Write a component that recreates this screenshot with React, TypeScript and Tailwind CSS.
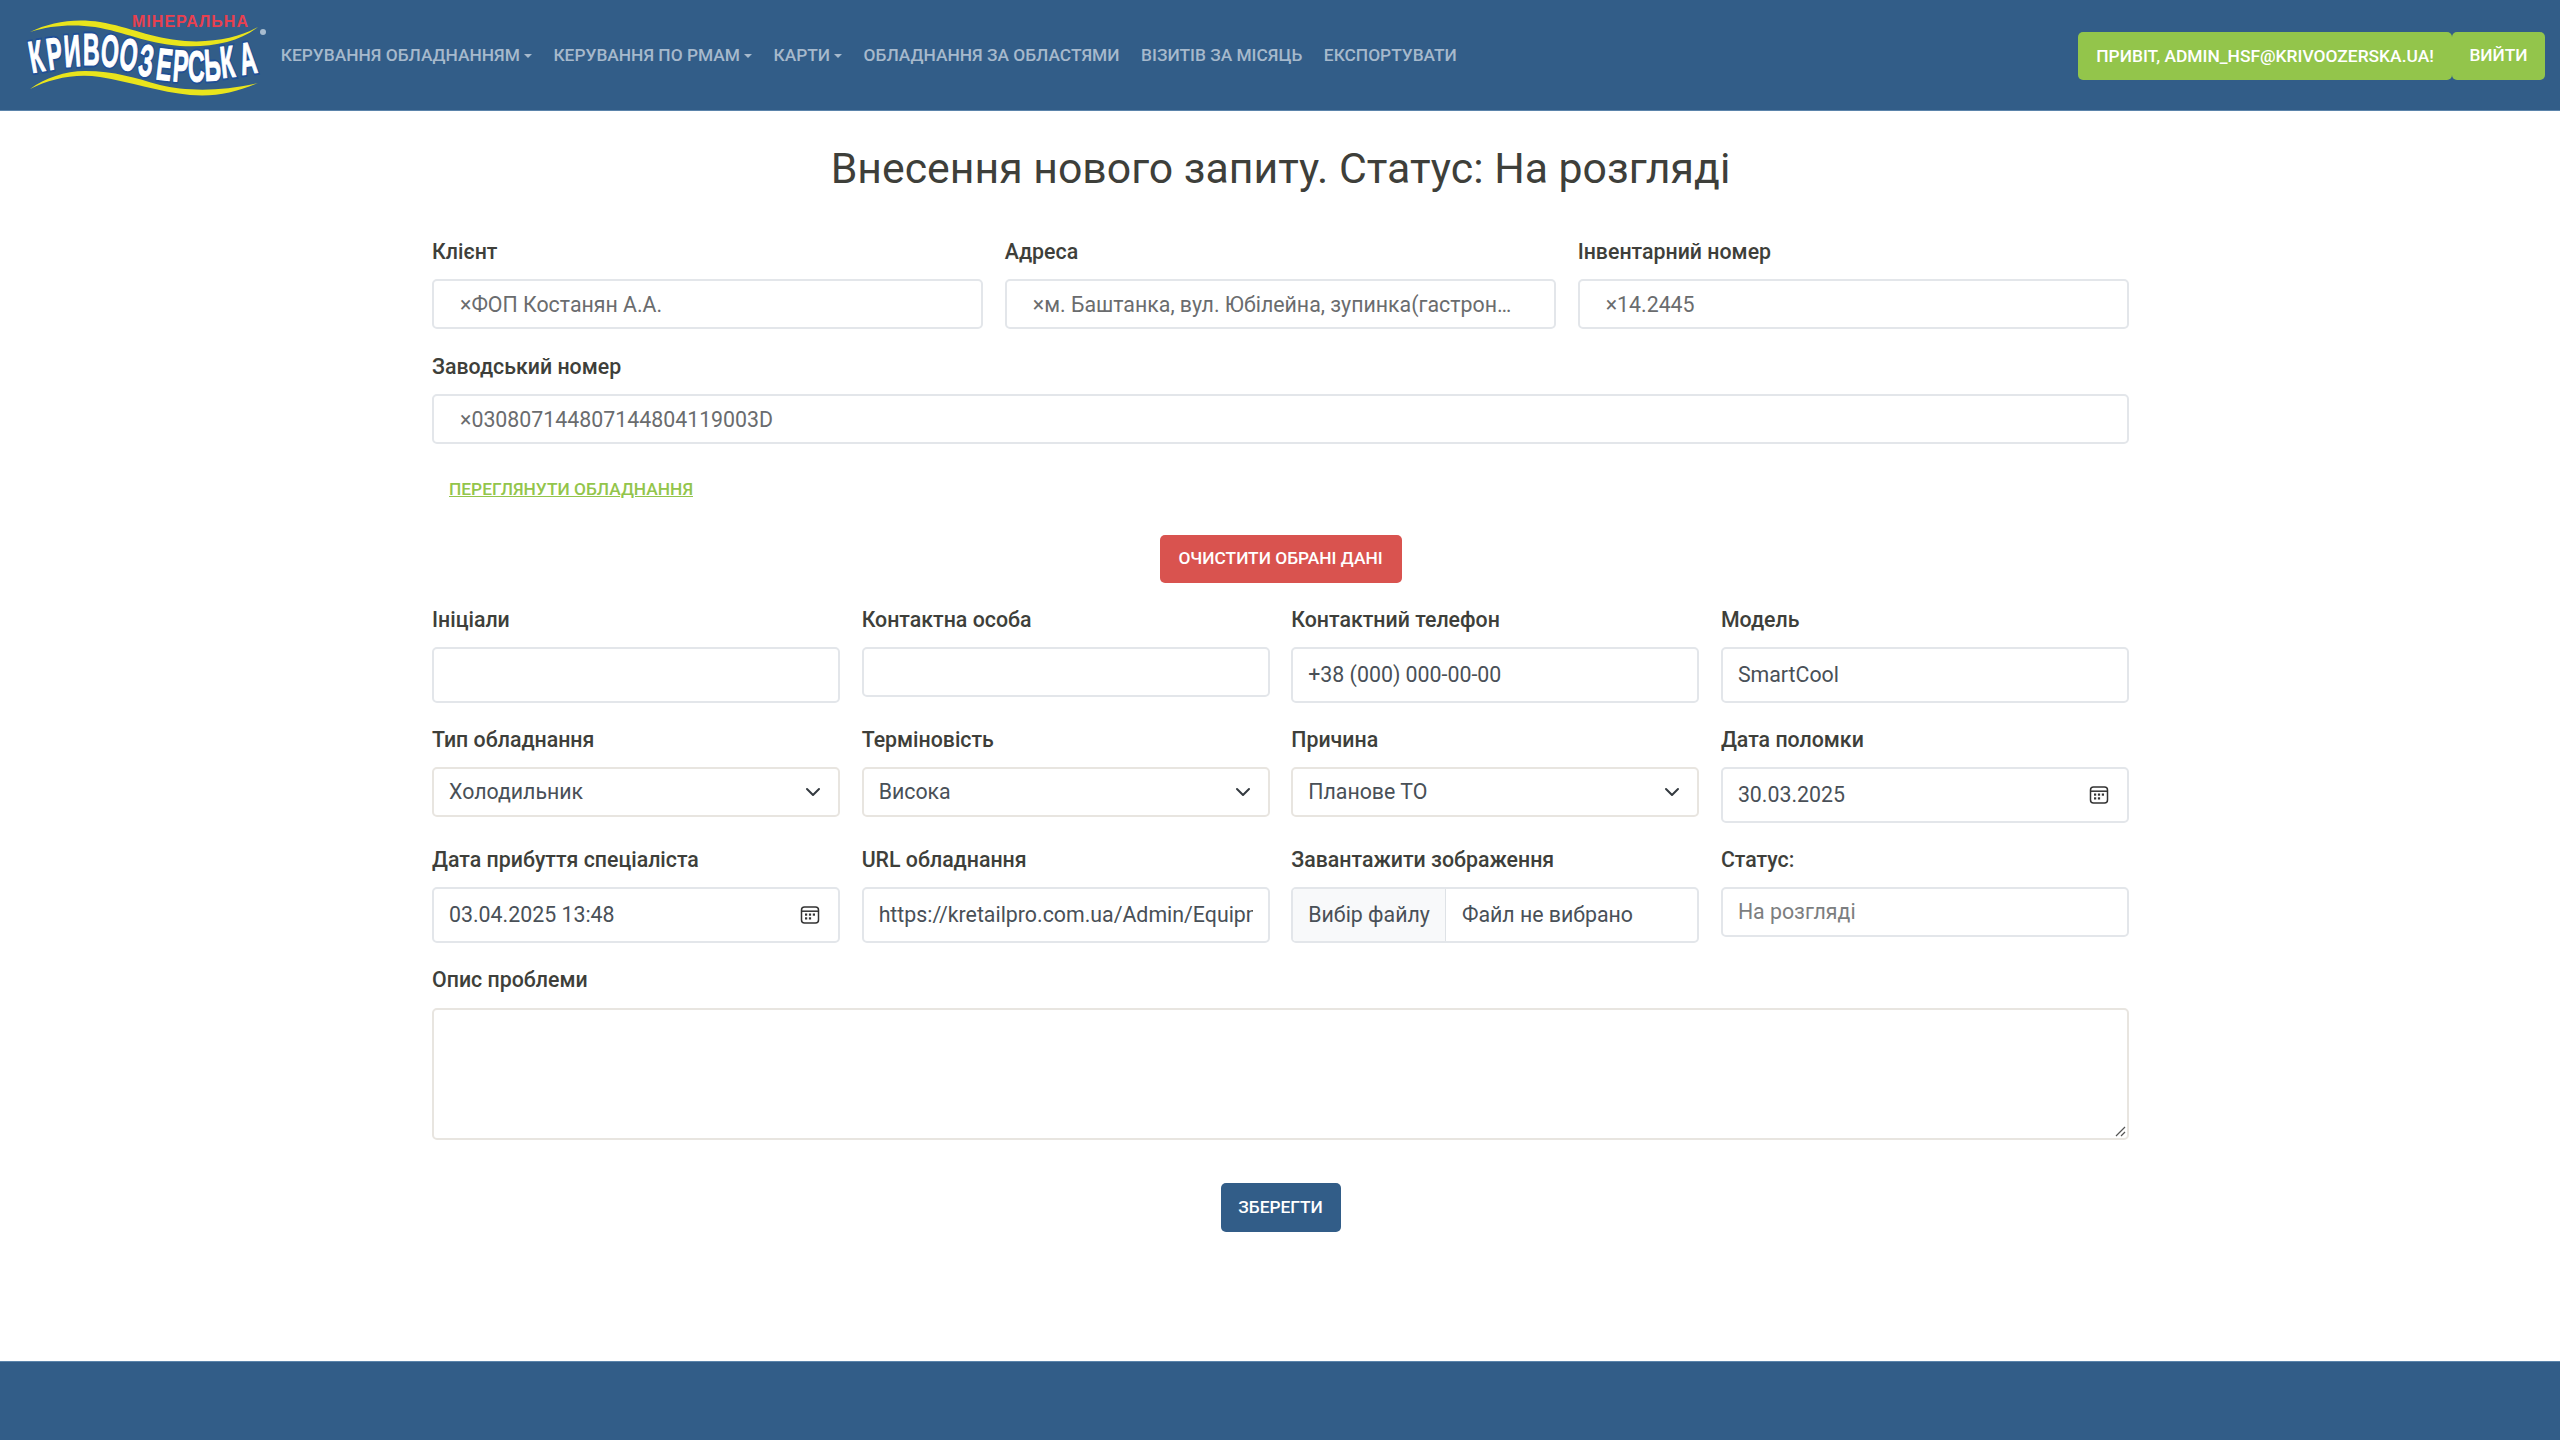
import React from "react";

const NAVY = "bg-[#325d88]";

function Label({ children }: { children: React.ReactNode }) {
  return <label className="mb-[15px] block h-[24px] text-[21.33px] leading-[24px] font-medium text-[#3e3f3a]">{children}</label>;
}

function Tagged({ text, label }: { text: string; label: string }) {
  return (
    <div>
      <Label>{label}</Label>
      <div className="flex h-[50px] items-center overflow-hidden rounded-[5px] border-2 border-[#e3e6ea] bg-white pt-[2px] pl-[26px] pr-[42px] text-[21.33px] text-[#6a6c6e]">
        <span className="truncate">×{text}</span>
      </div>
    </div>
  );
}

function Field({ label, h = 56, value, placeholder }: { label: string; h?: number; value?: string; placeholder?: boolean }) {
  return (
    <div>
      <Label>{label}</Label>
      <div
        className={`flex items-center rounded-[5px] border-2 border-[#e3e6ea] bg-white px-[15px] text-[21.33px] ${placeholder ? "text-[#7c7e80]" : "text-[#495057]"}`}
        style={{ height: h }}
      >
        <span className="block w-full overflow-hidden whitespace-nowrap">{value}</span>
      </div>
    </div>
  );
}

function Chevron() {
  return (
    <svg viewBox="0 0 16 16" className="h-[16px] w-[16px] shrink-0 text-[#343a40]" fill="none" stroke="currentColor" strokeWidth="2" strokeLinecap="round" strokeLinejoin="round">
      <path d="M2 5l6 6 6-6" />
    </svg>
  );
}

function Sel({ label, value }: { label: string; value: string }) {
  return (
    <div>
      <Label>{label}</Label>
      <div className="flex h-[50px] items-center justify-between rounded-[5px] border-2 border-[#e8e5e0] bg-white pl-[15px] pr-[17px] text-[21.33px] text-[#495057]">
        <span>{value}</span>
        <Chevron />
      </div>
    </div>
  );
}

function Cal() {
  return (
    <svg viewBox="0 0 20 20" className="h-[20px] w-[20px] shrink-0 text-[#333]" fill="none" stroke="currentColor" strokeWidth="1.5">
      <rect x="1.5" y="2" width="17" height="16" rx="3" />
      <path d="M1.5 6.2h17" />
      <g fill="currentColor" stroke="none">
        <rect x="5" y="8.5" width="2.2" height="2.2" />
        <rect x="8.9" y="8.5" width="2.2" height="2.2" />
        <rect x="12.8" y="8.5" width="2.2" height="2.2" />
        <rect x="5" y="12.3" width="2.2" height="2.2" />
        <rect x="8.9" y="12.3" width="2.2" height="2.2" />
      </g>
    </svg>
  );
}

function DateField({ label, value }: { label: string; value: string }) {
  return (
    <div>
      <Label>{label}</Label>
      <div className="flex h-[56px] items-center justify-between rounded-[5px] border-2 border-[#e3e6ea] bg-white pl-[15px] pr-[18px] text-[21.33px] text-[#495057]">
        <span>{value}</span>
        <Cal />
      </div>
    </div>
  );
}

function NavItem({ children, caret }: { children: React.ReactNode; caret?: boolean }) {
  return (
    <span className="flex items-center whitespace-nowrap px-[10.8px] text-[17.33px] font-medium text-[#a6b9cc] uppercase">
      {children}
      {caret && <span className="ml-[4px] h-0 w-0 border-x-[4px] border-t-[4px] border-x-transparent border-t-[#a6b9cc]" />}
    </span>
  );
}

const letters: [string, number, number, number][] = [
  ["К", 32, 73, -10],
  ["Р", 49, 70, -8],
  ["И", 65, 67, -4],
  ["В", 83, 65, 0],
  ["О", 100, 66, 4],
  ["О", 118, 69, 7],
  ["З", 137, 75, 8],
  ["Е", 155, 79, 7],
  ["Р", 172, 81, 4],
  ["С", 188, 82, 0],
  ["Ь", 205, 81, -3],
  ["К", 222, 78, -6],
  ["А", 242, 75, -9],
];

function Logo() {
  return (
    <svg viewBox="0 0 270 111" className="-mt-[2px] h-[111px] w-[270px] shrink-0">
      <path d="M30 32C50 22 75 18 100 22C130 27 150 38 185 41C215 43 240 37 258 27C240 42 210 48 180 46C145 43 125 32 95 27C75 24 50 25 30 32Z" fill="#e9e41c" />
      <path d="M30 89C45 78 65 71 85 71C115 71 135 78 160 85C185 91 220 92 258 83C235 93 215 97 190 95C160 92 130 82 100 77C75 73 50 79 30 89Z" fill="#e9e41c" />
      <g fontFamily="Liberation Sans" fontWeight="700">
        {letters.map(([c, x, y, r], i) => (
          <text key={i} transform={`translate(${x} ${y}) rotate(${r}) scale(0.72 1.4)`} fontSize="32" fill="#1f4f96" stroke="#1f4f96" strokeWidth="3.5">
            {c}
          </text>
        ))}
        {letters.map(([c, x, y, r], i) => (
          <text key={i} transform={`translate(${x} ${y}) rotate(${r}) scale(0.72 1.4)`} fontSize="32" fill="#ffffff" stroke="#ffffff" strokeWidth="0.8">
            {c}
          </text>
        ))}
      </g>
      <text x="132" y="27" fontFamily="Liberation Sans" fontWeight="700" fontSize="16" textLength="116" lengthAdjust="spacing" fill="#e8404f">
        МІНЕРАЛЬНА
      </text>
      <circle cx="263" cy="32" r="3" fill="#a8bccf" />
    </svg>
  );
}

export default function App() {
  return (
    <div className="flex min-h-[1440px] flex-col bg-white font-['Roboto','Liberation_Sans',sans-serif]">
      <header className={`flex h-[111px] items-center border-b border-[#5b84ab] ${NAVY} pt-[2px] pr-[15px]`}>
        <Logo />
        <nav className="flex flex-1 items-center">
          <NavItem caret>Керування обладнанням</NavItem>
          <NavItem caret>Керування по РМАМ</NavItem>
          <NavItem caret>Карти</NavItem>
          <NavItem>Обладнання за областями</NavItem>
          <NavItem>Візитів за місяць</NavItem>
          <NavItem>Експортувати</NavItem>
        </nav>
        <div className="flex">
          <span className="flex h-[48px] w-[374px] items-center justify-center rounded-[5px] bg-[#93c54b] text-[17.4px] font-medium whitespace-nowrap text-white">
            ПРИВІТ, ADMIN_HSF@KRIVOOZERSKA.UA!
          </span>
          <span className="flex h-[48px] w-[93px] items-center justify-center rounded-[5px] bg-[#93c54b] text-[17.33px] font-medium text-white">
            ВИЙТИ
          </span>
        </div>
      </header>

      <main className="ml-[432px] w-[1697px] flex-1 pt-[33px]">
        <h1 className="text-center text-[42.8px] leading-[48px] font-normal text-[#3e3f3a]">Внесення нового запиту. Статус: На розгляді</h1>

        <div className="mt-[48px] grid grid-cols-3 gap-x-[21.5px]">
          <Tagged label="Клієнт" text="ФОП Костанян А.А." />
          <Tagged label="Адреса" text="м. Баштанка, вул. Юбілейна, зупинка(гастрономчик)" />
          <Tagged label="Інвентарний номер" text="14.2445" />
        </div>
        <div className="mt-[26px]">
          <Tagged label="Заводський номер" text="030807144807144804119003D" />
        </div>

        <div className="mt-[35px] pl-[17px] text-[17.33px] leading-[20px] font-medium text-[#93c54b] underline">ПЕРЕГЛЯНУТИ ОБЛАДНАННЯ</div>

        <div className="mt-[36px] flex justify-center">
          <span className="flex h-[48px] w-[242px] items-center justify-center rounded-[5px] bg-[#d9534f] text-[17.33px] font-medium text-white">
            ОЧИСТИТИ ОБРАНІ ДАНІ
          </span>
        </div>

        <div className="mt-[25px] grid grid-cols-4 items-start gap-x-[21.5px]">
          <div className="h-[120px]"><Field label="Ініціали" /></div>
          <div className="h-[120px]"><Field label="Контактна особа" h={50} /></div>
          <div className="h-[120px]"><Field label="Контактний телефон" value="+38 (000) 000-00-00" /></div>
          <div className="h-[120px]"><Field label="Модель" value="SmartCool" /></div>

          <div className="h-[120px]"><Sel label="Тип обладнання" value="Холодильник" /></div>
          <div className="h-[120px]"><Sel label="Терміновість" value="Висока" /></div>
          <div className="h-[120px]"><Sel label="Причина" value="Планове ТО" /></div>
          <div className="h-[120px]"><DateField label="Дата поломки" value="30.03.2025" /></div>

          <div className="h-[120px]"><DateField label="Дата прибуття спеціаліста" value="03.04.2025 13:48" /></div>
          <div className="h-[120px]"><Field label="URL обладнання" value="https://kretailpro.com.ua/Admin/Equipment/Details/1" /></div>
          <div className="h-[120px]">
            <Label>Завантажити зображення</Label>
            <div className="flex h-[56px] items-center overflow-hidden rounded-[5px] border-2 border-[#e3e6ea] bg-white text-[21.33px] text-[#495057]">
              <span className="flex h-full items-center border-r border-[#dee2e6] bg-[#f8f9fa] px-[15px]">Вибір файлу</span>
              <span className="px-[16px]">Файл не вибрано</span>
            </div>
          </div>
          <div className="h-[120px]"><Field label="Статус:" h={50} value="На розгляді" placeholder /></div>
        </div>

        <Label>Опис проблеми</Label>
        <div className="relative mt-[16px] h-[132px] rounded-[5px] border-2 border-[#e8e5e0] bg-white">
          <svg viewBox="0 0 12 12" className="absolute right-[1px] bottom-[1px] h-[12px] w-[12px]" stroke="#555" strokeWidth="1.2">
            <path d="M2 11L11 2M7 11L11 7" />
          </svg>
        </div>

        <div className="mt-[43px] flex justify-center">
          <span className={`flex h-[49px] w-[120px] items-center justify-center rounded-[5px] ${NAVY} text-[17.33px] font-medium text-white`}>ЗБЕРЕГТИ</span>
        </div>
      </main>

      <footer className={`h-[79px] border-t border-[#5b84ab] ${NAVY}`} />
    </div>
  );
}
